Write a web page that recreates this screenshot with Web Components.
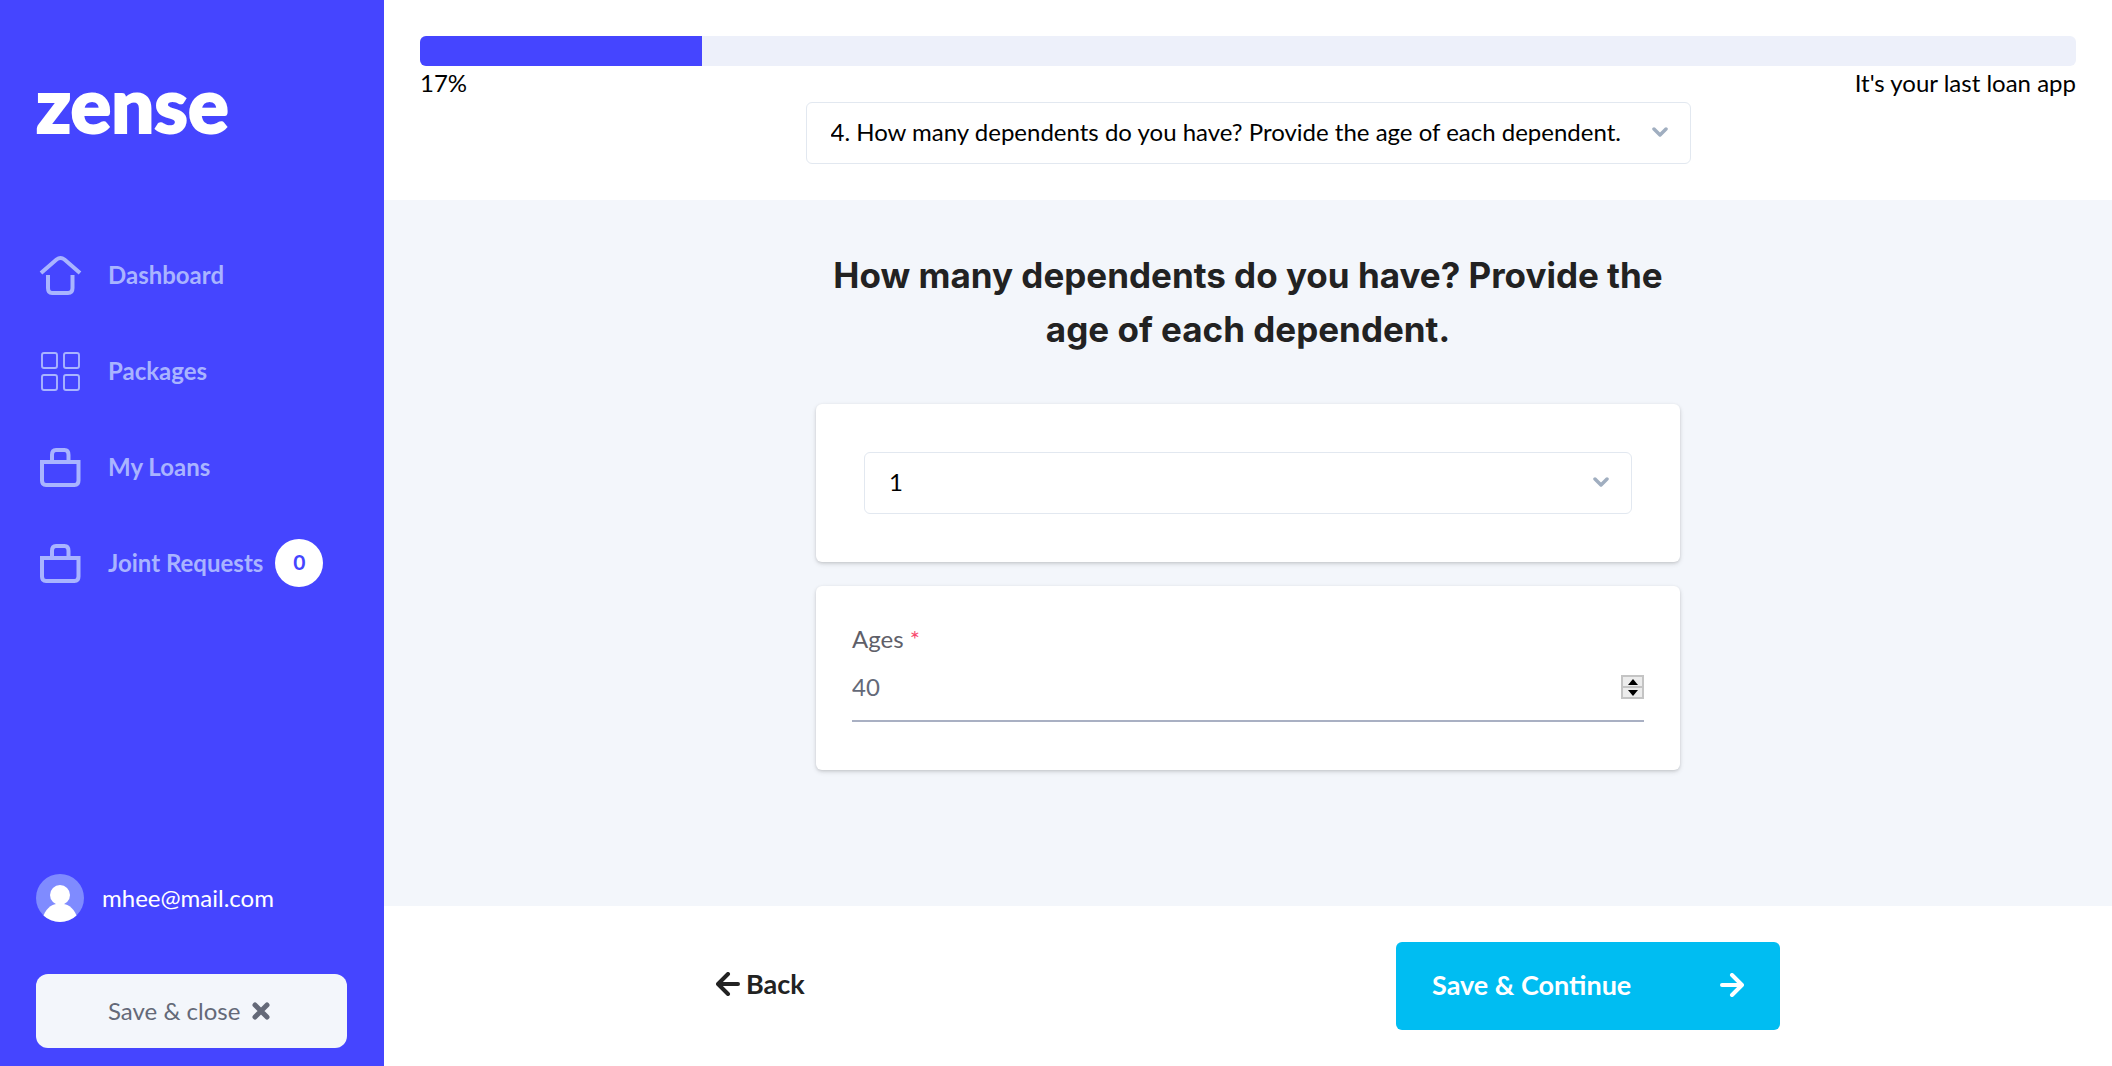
<!DOCTYPE html>
<html lang="en">
<head>
<meta charset="utf-8">
<meta name="viewport" content="width=device-width, initial-scale=1">
<title>Zense</title>
<style>
  body { margin: 0; font-family: Lato, Carlito, "Liberation Sans", sans-serif; font-size: 24px; line-height: 34px; color: #000; }
</style>
</head>
<body>
<zense-app></zense-app>
<script>
const define = (name, html, setup) => customElements.define(name, class extends HTMLElement {
  constructor() {
    super();
    const t = document.createElement('template');
    t.innerHTML = '<style>*{box-sizing:border-box}button,input,select{font:inherit;color:inherit}</style>' + html;
    this.attachShadow({ mode: 'open' }).append(t.content.cloneNode(true));
  }
  connectedCallback() { if (setup) setup(this, this.shadowRoot); }
});

const glyphs = {
  home: '<g fill="none" stroke="currentColor" stroke-width="4"><path d="M5 22 20.500 8.500Q24.500 5.500 28.500 8.500L44 22"/><path d="M12 24V37Q12 42 16 42H32Q36.500 42 36.500 37V24"/></g>',
  grid: '<g fill="none" stroke="currentColor" stroke-width="1.900"><rect x="6" y="6" width="15" height="15" rx="2"/><rect x="28" y="6" width="15" height="15" rx="2"/><rect x="6" y="28" width="15" height="15" rx="2"/><rect x="28" y="28" width="15" height="15" rx="2"/></g>',
  bag: '<g fill="none" stroke="currentColor" stroke-width="4"><path d="M6 19H42.500V37.500Q42.500 42 38.500 42H10Q6 42 6 37.500ZM16 19V12Q16 7 20 7H28.500Q32.500 7 32.500 12V19"/></g>',
  user: '<circle cx="24" cy="24" r="24" fill="#7f8bff"/><circle cx="24" cy="21" r="10" fill="#fff"/><path d="M7.500 41.400C11 33 17 29.500 24 29.500S37 33 40.500 41.400A24 24 0 0 1 7.500 41.400Z" fill="#fff"/>'
};

define('nav-item', `
<style>
  :host { display: block; color: #a9b4ff; font-weight: 700; }
  a { display: flex; align-items: center; color: inherit; text-decoration: none; height: 48px; }
  svg { width: 48px; height: 48px; margin-right: 24px; flex: none; }
</style>
<a href="#"><svg viewBox="0 0 48 48" aria-hidden="true"></svg><slot></slot></a>`,
(el, root) => { root.querySelector('svg').innerHTML = glyphs[el.getAttribute('icon')]; });

define('count-badge', `
<style>
  :host { box-sizing: border-box; display: grid; place-items: center; width: 48px; height: 48px; margin-left: 12px; padding-bottom: 2px; border-radius: 50%; background: #fff; color: #4545ff; font-size: 21px; line-height: 24px; }
</style><slot></slot>`);

define('side-bar', `
<style>
  :host { display: flex; flex-direction: column; background: #4545ff; color: #fff; padding: 62px 37px 18px 36px; }
  .logo { font-weight: 900; font-size: 76px; line-height: 84px; color: #fff; text-decoration: none; align-self: flex-start; -webkit-text-stroke: 2px #fff; }
  nav { display: grid; gap: 48px; margin-top: 105px; }
  .user { display: flex; align-items: center; gap: 18px; margin-top: auto; }
  .user svg { width: 48px; height: 48px; }
  .close { display: flex; align-items: center; gap: 12px; margin-top: 52px; padding: 0 72px; height: 74px; border: 0; border-radius: 12px; background: #f3f6fb; color: #646978; white-space: nowrap; cursor: pointer; }
</style>
<a class="logo" href="#">zense</a>
<nav>
  <nav-item icon="home">Dashboard</nav-item>
  <nav-item icon="grid">Packages</nav-item>
  <nav-item icon="bag">My Loans</nav-item>
  <nav-item icon="bag">Joint Requests<count-badge>0</count-badge></nav-item>
</nav>
<div class="user"><svg viewBox="0 0 48 48" aria-hidden="true">${glyphs.user}</svg><span>mhee@mail.com</span></div>
<button class="close" type="button">Save &amp; close
  <svg width="18" height="18" viewBox="0 0 18 18" aria-hidden="true"><path d="M3 3 15 15M15 3 3 15" stroke="currentColor" stroke-width="5" stroke-linecap="round"/></svg>
</button>`);

define('progress-bar', `
<style>
  :host { display: block; }
  .track { height: 30px; border-radius: 6px; background: #edf0fa; overflow: hidden; }
  .fill { height: 100%; background: #4545ff; }
  .labels { display: flex; justify-content: space-between; padding-bottom: 2px; }
</style>
<div class="track" role="progressbar" aria-valuemin="0" aria-valuemax="100" aria-label="Application progress"><div class="fill"></div></div>
<div class="labels"><span class="value"></span><slot></slot></div>`,
(el, root) => {
  const v = el.getAttribute('value');
  root.querySelector('.fill').style.width = v + '%';
  root.querySelector('.value').textContent = v + '%';
  root.querySelector('.track').setAttribute('aria-valuenow', v);
});

define('select-box', `
<style>
  :host { display: grid; align-items: center; }
  select, svg { grid-area: 1 / 1; }
  select { appearance: none; width: 100%; height: 62px; padding: 0 66px 2px 24px; border: 1px solid #e2e8f0; border-radius: 6px; background: #fff; }
  svg { justify-self: end; margin-right: 23px; pointer-events: none; }
</style>
<select></select>
<svg width="16" height="12" viewBox="0 0 16 12" aria-hidden="true"><path d="M2 2 8 8 14 2" fill="none" stroke="#a0aec0" stroke-width="3.500" stroke-linecap="round" stroke-linejoin="round"/></svg>`,
(el, root) => {
  const s = root.querySelector('select');
  s.setAttribute('aria-label', el.getAttribute('label'));
  s.add(new Option(el.getAttribute('value')));
});

define('form-card', `
<style>
  :host { display: block; border-radius: 6px; background: #fff; padding: 48px; box-shadow: 0 2px 5px rgba(0,0,0,.12), 0 1px 3px rgba(0,0,0,.1); }
  :host([field]) { padding: 36px 36px 48px; }
</style><slot></slot>`);

define('number-field', `
<style>
  :host { display: block; color: #646978; }
  label { display: block; color: #5f5f69; }
  .star { color: #f8486e; }
  .row { display: flex; align-items: center; padding: 14px 0 16px; border-bottom: 2px solid #a9b0c3; }
  input { appearance: textfield; flex: 1; min-width: 0; height: 34px; padding: 0 0 1px; border: 0; outline: 0; background: none; }
  input::-webkit-inner-spin-button { appearance: none; }
  .step { display: grid; border: 1px solid #c4c4c4; width: 23px; height: 24px; }
  button { display: grid; place-items: center; padding: 0; border: 1px solid #c4c4c4; background: #ececec; }
</style>
<label for="n"><slot></slot> <span class="star">*</span></label>
<div class="row"><input id="n" type="number">
  <div class="step">
    <button type="button" aria-label="Increase"><svg width="10" height="6" viewBox="0 0 10 6"><path d="M0 6 5 0 10 6Z" fill="#000"/></svg></button>
    <button type="button" aria-label="Decrease"><svg width="10" height="6" viewBox="0 0 10 6"><path d="M0 0 5 6 10 0Z" fill="#000"/></svg></button>
  </div>
</div>`,
(el, root) => {
  const i = root.querySelector('input');
  i.value = el.getAttribute('value');
  const [up, down] = root.querySelectorAll('button');
  up.onclick = () => i.stepUp();
  down.onclick = () => i.stepDown();
});

define('step-footer', `
<style>
  :host { display: block; background: #fff; padding: 36px; font-weight: 700; font-size: 27px; }
  .inner { display: flex; align-items: center; justify-content: space-between; max-width: 1064px; margin: 0 auto; }
  button { display: flex; align-items: center; border: 0; padding: 0 0 4px; cursor: pointer; }
  .back { gap: 6px; background: none; color: #222; }
  .next { justify-content: space-between; width: 384px; height: 88px; padding: 0 36px 2px; border-radius: 6px; background: #00bdf2; color: #fff; }
  path { fill: none; stroke: currentColor; stroke-width: 4; stroke-linecap: round; stroke-linejoin: round; }
</style>
<div class="inner">
  <button class="back" type="button"><svg width="24" height="24" viewBox="0 0 24 24" aria-hidden="true"><path d="M22 12H3M12 2 2 12 12 22"/></svg>Back</button>
  <button class="next" type="button">Save &amp; Continue<svg width="24" height="24" viewBox="0 0 24 24" aria-hidden="true"><path d="M2 12H21M12 2 22 12 12 22"/></svg></button>
</div>`);

define('zense-app', `
<style>
  :host { display: grid; grid-template-columns: 384px minmax(0, 1fr); min-height: 100vh; }
  .page { display: flex; flex-direction: column; }
  header { padding: 36px; }
  header select-box { width: fit-content; margin: 0 auto; }
  main { flex: 1; background: #f3f6fb; padding: 48px 36px; }
  .column { display: grid; gap: 24px; max-width: 864px; margin: 0 auto; }
  h1 { margin: 0 0 24px; font-family: Inter, sans-serif; font-weight: 700; font-size: 35px; line-height: 54px; text-align: center; color: #222; }
</style>
<side-bar></side-bar>
<div class="page">
  <header>
    <progress-bar value="17">It's your last loan app</progress-bar>
    <select-box label="Question" value="4. How many dependents do you have? Provide the age of each dependent."></select-box>
  </header>
  <main><div class="column">
    <h1>How many dependents do you have? Provide the age of each dependent.</h1>
    <form-card><select-box label="Number of dependents" value="1"></select-box></form-card>
    <form-card field><number-field value="40">Ages</number-field></form-card>
  </div></main>
  <step-footer></step-footer>
</div>`);
</script>
</body>
</html>
